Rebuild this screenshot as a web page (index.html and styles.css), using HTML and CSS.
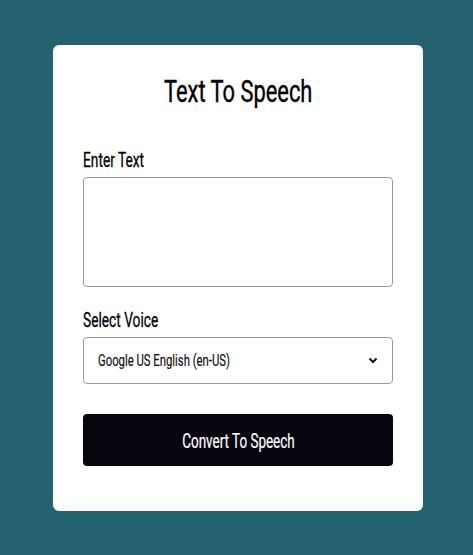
FILE: index.html
```html
<!DOCTYPE html>
<html>
<head>
<meta charset="utf-8">
<link rel="stylesheet" href="styles.css">
</head>
<body>
<div class="card">
  <h1 class="title"><span class="nar nar-c">Text To Speech</span></h1>
  <label class="label" for="txt"><span class="nar nar-l">Enter Text</span></label>
  <textarea id="txt" class="textarea"></textarea>
  <label class="label label-voice" for="voice"><span class="nar nar-l">Select Voice</span></label>
  <div class="select" id="voice">
    <span class="select-text nar nar-l">Google US English (en-US)</span>
    <svg class="chev" width="10" height="7" viewBox="0 0 10 7"><path d="M1.5 1.5 L5 5 L8.5 1.5" fill="none" stroke="#111" stroke-width="2"/></svg>
  </div>
  <button class="btn"><span class="nar nar-c btn-text">Convert To Speech</span></button>
</div>
</body>
</html>
```
FILE: styles.css
```css
* { box-sizing: border-box; }
html, body { margin: 0; height: 100%; }
body {
  background: #25626f;
  font-family: Roboto, "DejaVu Sans", sans-serif;
  font-weight: 400;
  padding-top: 45px;
  padding-left: 3px;
  display: flex;
  justify-content: center;
  align-items: flex-start;
}
.card {
  width: 370px;
  height: 466px;
  background: #fff;
  border-radius: 6px;
  padding: 31px 30px 45px;
  display: flex;
  flex-direction: column;
}
.nar { display: inline-block; white-space: nowrap; }
.nar-c { transform-origin: center; }
.nar-l { transform-origin: left center; }
.title {
  margin: 0 0 41px;
  text-align: center;
  font-weight: 400;
  font-size: 31px;
  line-height: 32px;
  color: #000;
  -webkit-text-stroke: 0.4px #000;
}
.title .nar { transform: scaleX(0.705); }
.label {
  font-size: 20.5px;
  line-height: 22px;
  color: #000;
  margin-bottom: 6px;
  -webkit-text-stroke: 0.3px #000;
}
.label .nar { transform: scaleX(0.67); }
.label-voice { margin-top: 22px; }
.textarea {
  width: 310px;
  height: 110px;
  border: 1px solid #9a9a9a;
  border-radius: 4px;
  resize: none;
  display: block;
  margin: 0;
}
.select {
  height: 47px;
  border: 1px solid #9a9a9a;
  border-radius: 4px;
  display: flex;
  align-items: center;
  justify-content: space-between;
  padding: 0 14px 0 14px;
}
.select-text {
  font-size: 16.5px;
  line-height: 20px;
  color: #111;
  transform: scaleX(0.685);
  -webkit-text-stroke: 0.2px #111;
}
.chev { display: block; }
.btn {
  margin-top: 30px;
  height: 52px;
  padding: 2px 0 0;
  background: #07060f;
  color: #fff;
  border: none;
  border-radius: 4px;
  font-family: inherit;
  font-weight: 400;
  font-size: 19.5px;
}
.btn-text { line-height: 20px; transform: scaleX(0.69); -webkit-text-stroke: 0.2px #fff; }
```
